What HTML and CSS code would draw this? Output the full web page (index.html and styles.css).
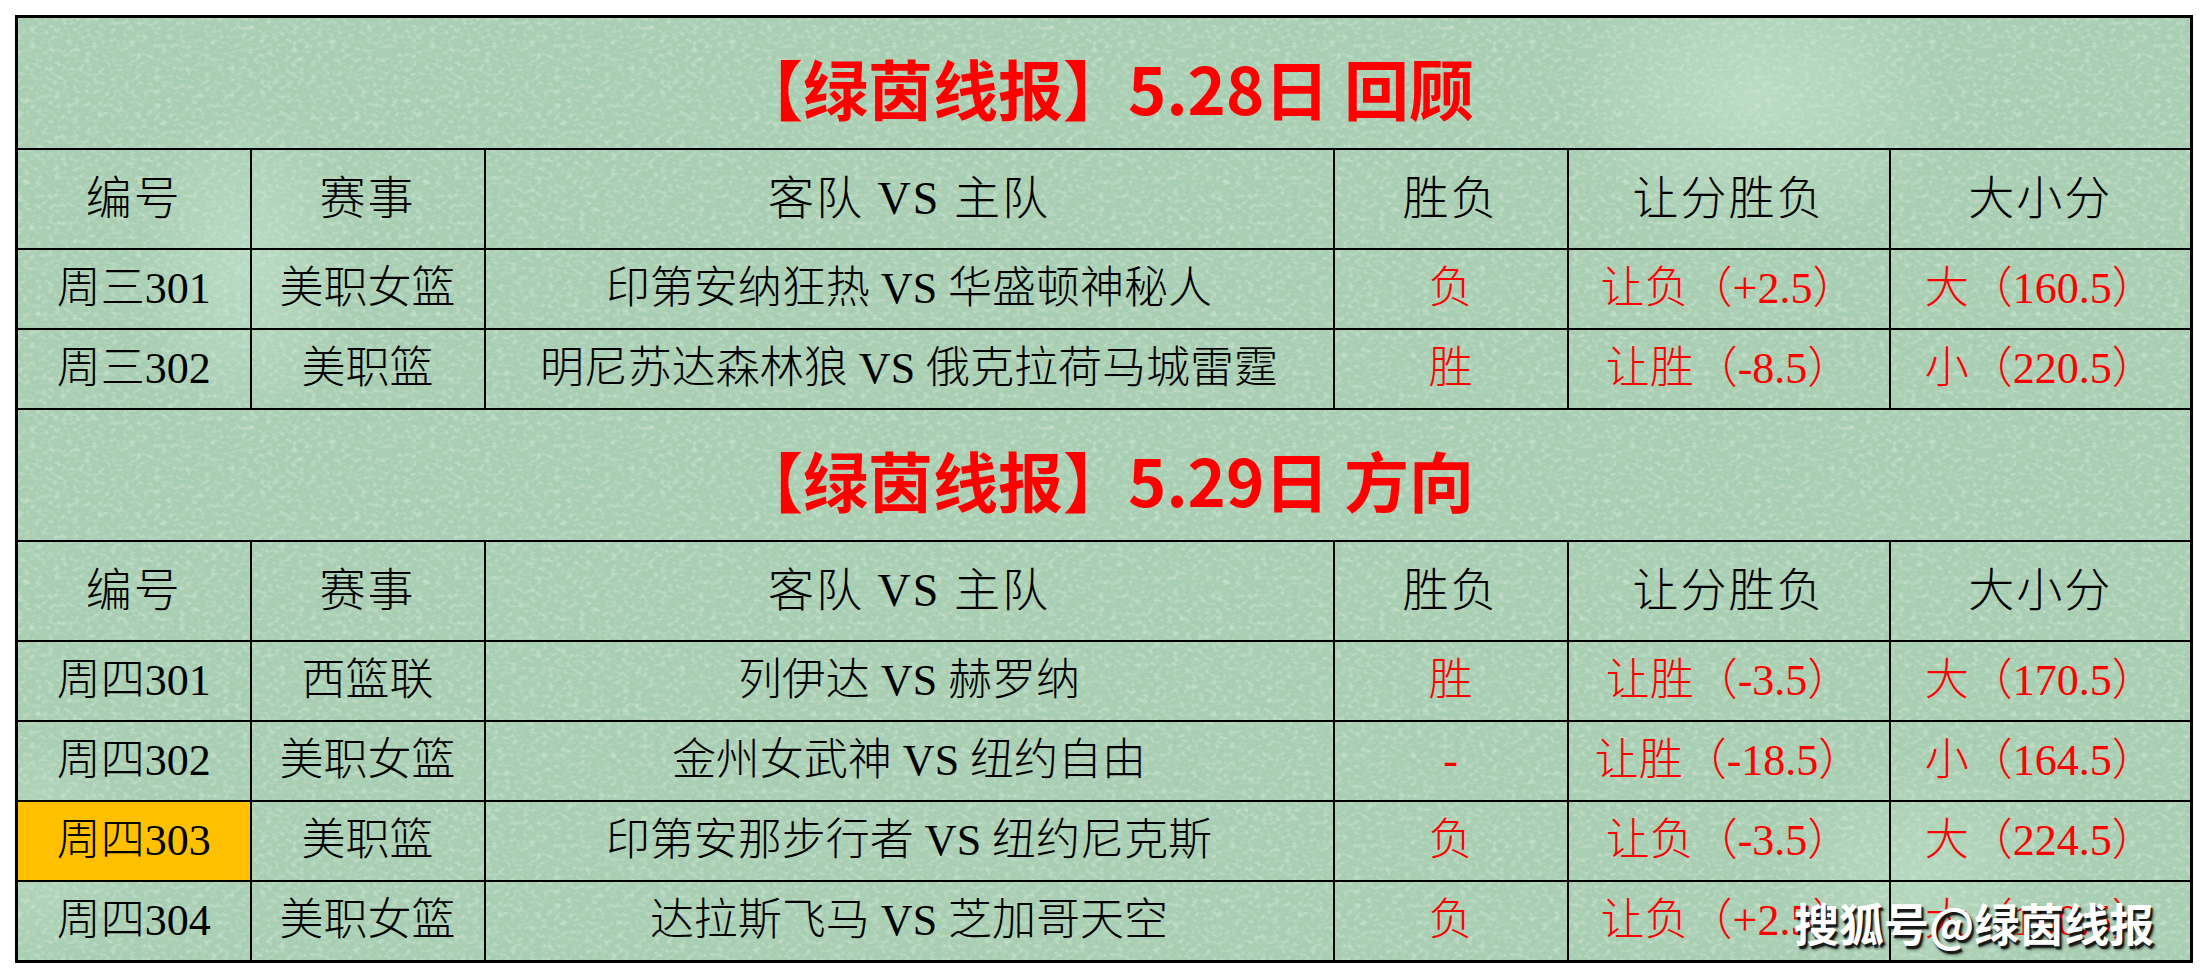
FILE: index.html
```html
<!DOCTYPE html>
<html lang="zh-CN">
<head>
<meta charset="utf-8">
<title>绿茵线报</title>
<link rel="stylesheet" href="styles.css">
</head>
<body>
<div class="page">
  <table class="sheet">
    <colgroup>
      <col class="c-id"><col class="c-lg"><col class="c-match"><col class="c-wl"><col class="c-hc"><col class="c-ou">
    </colgroup>
    <tbody>
      <tr class="r-title"><td colspan="6" class="title">【绿茵线报】5.28日 回顾</td></tr>
      <tr class="r-head">
        <td>编号</td><td>赛事</td><td>客队 VS 主队</td><td>胜负</td><td>让分胜负</td><td>大小分</td>
      </tr>
      <tr class="r-data">
        <td>周三301</td><td>美职女篮</td><td>印第安纳狂热 VS 华盛顿神秘人</td>
        <td class="red">负</td><td class="red">让负（+2.5）</td><td class="red">大（160.5）</td>
      </tr>
      <tr class="r-data">
        <td>周三302</td><td>美职篮</td><td>明尼苏达森林狼 VS 俄克拉荷马城雷霆</td>
        <td class="red">胜</td><td class="red">让胜（-8.5）</td><td class="red">小（220.5）</td>
      </tr>
      <tr class="r-title"><td colspan="6" class="title">【绿茵线报】5.29日 方向</td></tr>
      <tr class="r-head">
        <td>编号</td><td>赛事</td><td>客队 VS 主队</td><td>胜负</td><td>让分胜负</td><td>大小分</td>
      </tr>
      <tr class="r-data">
        <td>周四301</td><td>西篮联</td><td>列伊达 VS 赫罗纳</td>
        <td class="red">胜</td><td class="red">让胜（-3.5）</td><td class="red">大（170.5）</td>
      </tr>
      <tr class="r-data">
        <td>周四302</td><td>美职女篮</td><td>金州女武神 VS 纽约自由</td>
        <td class="red">-</td><td class="red">让胜（-18.5）</td><td class="red">小（164.5）</td>
      </tr>
      <tr class="r-data">
        <td class="hl">周四303</td><td>美职篮</td><td>印第安那步行者 VS 纽约尼克斯</td>
        <td class="red">负</td><td class="red">让负（-3.5）</td><td class="red">大（224.5）</td>
      </tr>
      <tr class="r-data">
        <td>周四304</td><td>美职女篮</td><td>达拉斯飞马 VS 芝加哥天空</td>
        <td class="red">负</td><td class="red">让负（+2.5）</td><td class="red">大（160.5）</td>
      </tr>
    </tbody>
  </table>
  <div class="watermark">搜狐号@绿茵线报</div>
</div>
</body>
</html>
```

FILE: styles.css
```css
html, body {
  margin: 0;
  padding: 0;
  background: #ffffff;
}

.page {
  position: relative;
  width: 2206px;
  height: 976px;
  padding: 15px 0 0 15px;
  box-sizing: border-box;
}

.sheet {
  border-collapse: collapse;
  table-layout: fixed;
  width: 2175px;
  border: 3px solid #000;
  background-color: #a9cfb3;
  background-image:
    radial-gradient(ellipse 190px 150px at 1740px 80px, rgba(206, 232, 213, 0.5), rgba(206, 232, 213, 0) 100%),
    radial-gradient(ellipse 110px 160px at 230px 250px, rgba(206, 232, 213, 0.45), rgba(206, 232, 213, 0) 100%),
    radial-gradient(ellipse 140px 120px at 1900px 860px, rgba(206, 232, 213, 0.35), rgba(206, 232, 213, 0) 100%),
    radial-gradient(ellipse 90px 110px at 30px 830px, rgba(206, 232, 213, 0.3), rgba(206, 232, 213, 0) 100%),
    url("data:image/svg+xml;utf8,<svg xmlns='http://www.w3.org/2000/svg' width='400' height='400'><filter id='a'><feTurbulence type='fractalNoise' baseFrequency='0.16 0.22' numOctaves='2' seed='7'/><feColorMatrix values='0 0 0 0 0.40 0 0 0 0 0.58 0 0 0 0 0.45 1.1 0 0 0 -0.5'/></filter><filter id='b'><feTurbulence type='fractalNoise' baseFrequency='0.16 0.22' numOctaves='2' seed='21'/><feColorMatrix values='0 0 0 0 0.82 0 0 0 0 0.92 0 0 0 0 0.85 1.1 0 0 0 -0.52'/></filter><rect width='400' height='400' filter='url(%23a)'/><rect width='400' height='400' filter='url(%23b)'/></svg>");
}

.c-id { width: 234px; }
.c-lg { width: 234px; }
.c-match { width: 849px; }
.c-wl { width: 234px; }
.c-hc { width: 322px; }
.c-ou { width: 302px; }

.sheet td {
  border: 2px solid #000;
  padding: 0;
  text-align: center;
  vertical-align: middle;
  white-space: nowrap;
  color: #000;
  font-family: "Liberation Serif", "Noto Sans CJK SC", serif;
  font-weight: 300;
}

.sheet .r-title td {
  height: 122px;
}

.sheet td.title {
  font-family: "Noto Sans CJK SC", "Liberation Sans", sans-serif;
  font-weight: 700;
  font-size: 65px;
  line-height: 1;
  color: #ff0000;
  padding-left: 4px;
  padding-top: 8px;
}

.sheet .r-head td {
  height: 98px;
  font-size: 46px;
  letter-spacing: 2px;
  line-height: 1;
}

.sheet .r-data td {
  height: 78px;
  font-size: 44px;
  line-height: 1;
}

.sheet td.red {
  color: #ff0000;
}

.sheet td.hl {
  background: #ffc000;
}

.watermark {
  position: absolute;
  left: 1794px;
  top: 900px;
  font-family: "Noto Sans CJK SC", "Liberation Sans", sans-serif;
  font-weight: 700;
  font-size: 45px;
  line-height: 1;
  color: #ffffff;
  text-shadow: 2px 3px 1px rgba(20, 20, 20, 0.95), 3px 4px 3px rgba(0, 0, 0, 0.5);
  white-space: nowrap;
}
```
